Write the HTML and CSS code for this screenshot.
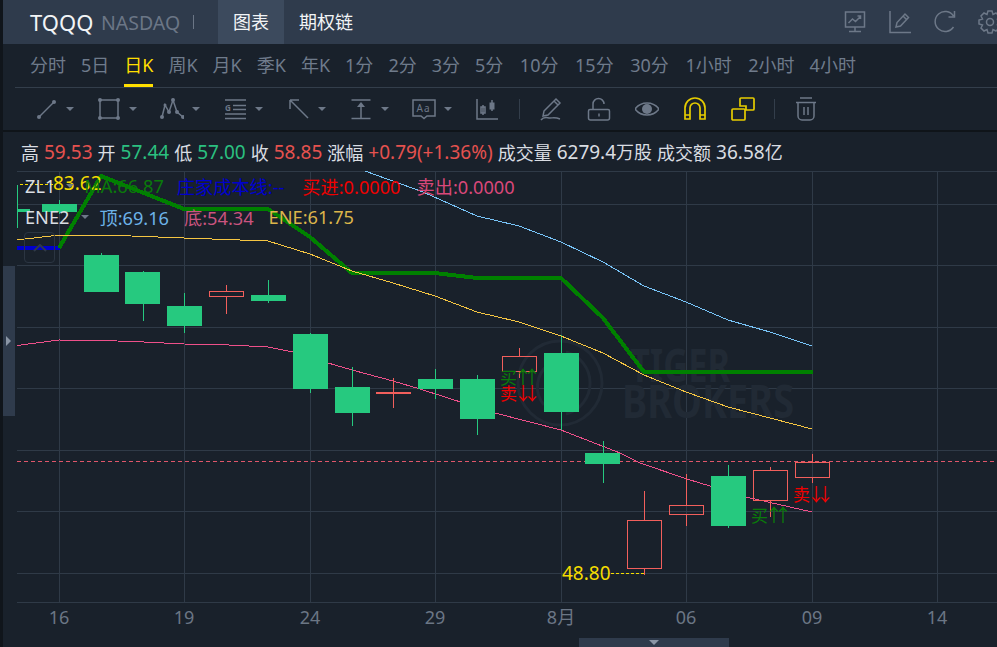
FILE: index.html
```html
<!DOCTYPE html>
<html lang="zh">
<head>
<meta charset="utf-8">
<title>TQQQ</title>
<link rel="stylesheet" href="styles.css">
</head>
<body>
<div class="app">
  <div class="edge"></div>
  <main class="main">
    <header class="header">
      <span class="sym">TQQQ</span>
      <span class="mkt">NASDAQ</span>
      <span class="bar"></span>
      <span class="tab on">图表</span>
      <span class="tab">期权链</span>
      <div class="head-icons">
        <svg class="ico" viewBox="0 0 24 24"><path d="M2.500 2h19v15h-19zM12 17v4M6 21.500h12M5.500 13l4-4 3 2.500 5-5M14.500 6h3v3"/></svg>
        <svg class="ico" viewBox="0 0 24 24"><path d="M2 1v21.500h21M8 17l1-4.500 8-8.500 3.500 3.500-8 8.500zM15 6l3.500 3.500"/></svg>
        <svg class="ico" viewBox="0 0 24 24"><path d="M20.500 17a10 10 0 1 1 0-11M21.500 1v6h-6"/></svg>
        <svg class="ico" viewBox="0 0 24 24"><path d="M10 1h4l1 3.500 3-1.500 3 3-1.500 3 3.500 1v4l-3.500 1 1.500 3-3 3-3-1.500-1 3.500h-4l-1-3.500-3 1.500-3-3 1.500-3-3.500-1v-4l3.500-1-1.500-3 3-3 3 1.500z"/><circle cx="12" cy="12" r="3.500"/></svg>
      </div>
    </header>
    <nav class="periods">
      <span class="per">分时</span><span class="per">5日</span><span class="per on">日K</span><span class="per">周K</span><span class="per">月K</span><span class="per">季K</span><span class="per">年K</span><span class="per">1分</span><span class="per">2分</span><span class="per">3分</span><span class="per">5分</span><span class="per">10分</span><span class="per">15分</span><span class="per">30分</span><span class="per">1小时</span><span class="per">2小时</span><span class="per">4小时</span>
    </nav>
    <div class="tools">
      <div class="tool"><svg class="ico" viewBox="0 0 24 24"><path d="M5 20L20 5"/><circle class="dot" cx="5" cy="20" r="2"/><circle class="dot" cx="20" cy="5" r="2"/></svg><i class="caret"></i></div>
      <div class="tool"><svg class="ico" viewBox="0 0 24 24"><path d="M3 3h18v18H3z"/><circle class="dot" cx="3" cy="3" r="2"/><circle class="dot" cx="21" cy="3" r="2"/><circle class="dot" cx="3" cy="21" r="2"/><circle class="dot" cx="21" cy="21" r="2"/></svg><i class="caret"></i></div>
      <div class="tool"><svg class="ico" viewBox="0 0 24 24"><path d="M2 20L5 8l4 7 4-12 4 12 6 5"/><circle class="dot" cx="2" cy="20" r="2"/><circle class="dot" cx="9" cy="15" r="2"/><circle class="dot" cx="13" cy="3" r="2"/><circle class="dot" cx="17" cy="15" r="2"/><circle class="dot" cx="23" cy="20" r="2"/><circle class="dot" cx="5" cy="8" r="1.500"/></svg><i class="caret"></i></div>
      <div class="tool"><svg class="ico" viewBox="0 0 24 24"><path d="M2 3h21M10 8.500h13M10 12.500h13M2 17h21M2 21.500h21"/><text class="ico-t" x="2" y="14">G</text></svg><i class="caret"></i></div>
      <div class="tool"><svg class="ico" viewBox="0 0 24 24"><path d="M22 21L4 3M4 3h9M4 3v9"/></svg><i class="caret"></i></div>
      <div class="tool"><svg class="ico" viewBox="0 0 24 24"><path d="M2.500 3h19M12 8v13M2.500 21.500h19"/><path class="dot" d="M12 5l4 5H8z"/></svg><i class="caret"></i></div>
      <div class="tool"><svg class="ico" viewBox="0 0 24 24"><path d="M1 3h22v16h-8l-3 2.500-3-2.500H1z"/><text class="ico-a" x="4.500" y="15">Aa</text></svg><i class="caret"></i></div>
      <div class="tool last"><svg class="ico" viewBox="0 0 24 24"><path d="M2 2v20h21M8 8v10M17 3v11"/><path class="dot" d="M14.500 5.500h5v7h-5z"/><path d="M6 10h4v6H6z"/></svg></div>
      <i class="sep"></i>
      <div class="btn"><svg class="ico" viewBox="0 0 24 24"><path d="M5 14L17 2l4 4L9 18l-5 1zM15 4l4 4M2 23c3-4 6-2 9-2s5-1 10 1"/></svg></div>
      <div class="btn"><svg class="ico" viewBox="0 0 24 24"><path d="M3 12.500h18a1.500 1.500 0 0 1 1.500 1.500v7a2 2 0 0 1-2 2h-17a2 2 0 0 1-2-2v-7a1.500 1.500 0 0 1 1.500-1.500zM6 12.500V7a5.500 5.500 0 0 1 11 0M12 16.500v3"/></svg></div>
      <div class="btn"><svg class="ico" viewBox="0 0 24 24"><path d="M0 12c6-8 18-8 24 0-6 8-18 8-24 0z"/><circle class="dot" cx="12" cy="12" r="5"/></svg></div>
      <div class="btn gold"><svg class="ico" viewBox="0 0 24 24"><path d="M2 22V11a10 10 0 0 1 20 0v11h-5V11a5 5 0 0 0-10 0v11zM2 18h5M17 18h5"/></svg></div>
      <div class="btn gold"><svg class="ico" viewBox="0 0 24 24"><path d="M10 1h12a1 1 0 0 1 1 1v10a1 1 0 0 1-1 1h-7V9H9V2a1 1 0 0 1 1-1zM2 12h11a1 1 0 0 1 1 1v9a1 1 0 0 1-1 1H2a1 1 0 0 1-1-1v-9a1 1 0 0 1 1-1z"/></svg></div>
      <i class="sep two"></i>
      <div class="btn"><svg class="ico" viewBox="0 0 24 24"><path d="M6 1h12M2 5.500h20M4 6v13a4 4 0 0 0 4 4h8a4 4 0 0 0 4-4V6M10 10v8M14 10v8"/></svg></div>
    </div>
    <div class="quote">
      <span>高</span><span class="n r">59.53</span><span>开</span><span class="n g">57.44</span><span>低</span><span class="n g">57.00</span><span>收</span><span class="n r">58.85</span><span>涨幅</span><span class="n r">+0.79(+1.36%)</span><span>成交量</span><span><span class="n">6279.4</span>万股</span><span>成交额</span><span><span class="n">36.58</span>亿</span>
    </div>
    <section class="chart">
      <svg class="plot" viewBox="3 171 994 476" width="994" height="476">
        <path class="grid" d="M17 171.500H997M17 204.500H997M17 265.500H997M17 327.500H997M17 388.500H997M17 450.500H997M17 511.500H997M17 573.500H997M17 602.500H997M59.500 171V602M184.500 171V602M310.500 171V602M435.500 171V602M561.500 171V602M686.500 171V602M812.500 171V602M937.500 171V602"/>
        <g class="wm">
          <circle cx="560" cy="383" r="42"/>
          <path d="M566 352a32 32 0 0 1 0 62M544 405a28 28 0 0 1 4-40"/>
          <text class="wm-t" x="630" y="382" textLength="100" lengthAdjust="spacingAndGlyphs">TIGER</text>
          <text class="wm-t" x="622" y="418" textLength="172" lengthAdjust="spacingAndGlyphs">BROKERS</text>
        </g>
        <path class="last-price" d="M17 461.500H997"/>
        <polyline class="l-pink" points="17,345.500 59,340 100,340.500 134,341.500 184,344 229,345 268,347 293,352 328,363 352,370 393,381 420,389 495,413 561,430 620,453 640,463 687,479 746,497 812,512"/>
        <rect class="l-blue-bar" x="17" y="246" width="43" height="4"/>
        <g class="down">
          <rect x="42" y="204" width="35" height="8"/><rect x="17" y="209" width="13" height="3"/>
          <rect x="84" y="255" width="35" height="37"/><rect x="125" y="272" width="35" height="32"/>
          <rect x="167" y="306" width="35" height="20"/><rect x="251" y="295" width="35" height="6"/>
          <rect x="293" y="334" width="35" height="55"/><rect x="335" y="387" width="35" height="26"/>
          <rect x="418" y="379" width="35" height="10"/><rect x="460" y="379" width="35" height="40"/>
          <rect x="544" y="353" width="35" height="59"/><rect x="585" y="453" width="35" height="11"/>
          <rect x="711" y="476" width="35" height="50"/>
          <path class="wick" d="M17.500 185V228M59.500 200V214M101.500 253V255M143.500 271V321M184.500 293V333M268.500 280V303M310.500 333V393M352.500 367V426M435.500 369V399M477.500 375V435M561.500 335V430M603.500 441V483M728.500 465V528"/>
        </g>
        <g class="up">
          <path class="wick" d="M226.500 285V291M226.500 296V314M393.500 378V408M519.500 348V356M519.500 372V378M644.500 491V520M644.500 568V575M686.500 474V505M686.500 514V526M770.500 467V470M770.500 500V517M812.500 454V462M812.500 477V483"/>
          <rect x="209.500" y="291.500" width="34" height="5"/>
          <rect x="502.500" y="356.500" width="34" height="15"/>
          <rect x="627.500" y="520.500" width="34" height="48"/>
          <rect x="669.500" y="505.500" width="34" height="9"/>
          <rect x="753.500" y="470.500" width="34" height="30"/>
          <rect x="795.500" y="462.500" width="34" height="15"/>
          <rect class="flat" x="376" y="392" width="35" height="2"/>
        </g>
        <polyline class="l-green" points="59,248 101,176 184,209 268,209 310,237 352,273 435,273 477,278 561,278 603,318 644,372 813,372"/>
        <polyline class="l-gold" points="17,240 59,235 105,235 184,238 268,241 310,254 352,271 393,283 435,296 477,312 519,322 561,336 603,353 644,375 686,392 728,407 770,418 812,429"/>
        <polyline class="l-sky" points="365,171 423,192 477,216 519,226 561,242 603,262 644,286 686,302 728,320 770,332 812,346"/>
        <text class="sig buy" x="500" y="384">买<tspan class="arw" dx="-3">↑↑</tspan></text>
        <text class="sig sell" x="500" y="400">卖<tspan class="arw" dx="-3">↓↓</tspan></text>
        <text class="sig buy" x="751" y="522">买<tspan class="arw" dx="-3">↑↑</tspan></text>
        <text class="sig sell" x="793" y="501">卖<tspan class="arw" dx="-3">↓↓</tspan></text>
        <path class="hl-dash" d="M20 184.500H53M611 573.500H645"/>
        <text class="hl" x="53" y="190">83.62</text>
        <text class="hl" x="562" y="580">48.80</text>
        <g class="axis">
          <text x="59" y="624">16</text><text x="184" y="624">19</text><text x="310" y="624">24</text><text x="435" y="624">29</text><text x="561" y="624">8月</text><text x="686" y="624">06</text><text x="812" y="624">09</text><text x="937" y="624">14</text>
        </g>
      </svg>
      <div class="legend l1">
        <span class="name">ZL1</span><i class="caret"></i>
        <span class="c-ma">MA:66.87</span><span class="c-blue">庄家成本线:--</span><span class="c-red">买进:0.0000</span><span class="c-pink">卖出:0.0000</span>
      </div>
      <div class="legend l2">
        <span class="name">ENE2</span><i class="caret"></i>
        <span class="c-sky">顶:69.16</span><span class="c-rose">底:54.34</span><span class="c-gold">ENE:61.75</span>
      </div>
      <div class="collapse"><svg viewBox="0 0 14 8" width="14" height="8"><path d="M1 7l6-6 6 6"/></svg></div>
      <div class="side-tab"><i></i></div>
      <div class="bottom-tab"><i></i></div>
    </section>
  </main>
</div>
</body>
</html>
```
FILE: styles.css
```css
* { box-sizing: border-box; }
html, body { margin: 0; padding: 0; background: #19212b; }
body {
  font-family: "Noto Sans", "Noto Sans CJK SC", sans-serif;
  overflow: hidden;
}
.app { display: flex; width: 997px; height: 647px; overflow: hidden; }
.edge { width: 3px; background: #10151b; flex: none; }
.main { width: 994px; display: flex; flex-direction: column; background: #19212b; }

.header { height: 44px; flex: none; display: flex; align-items: center; background: #2f3b4c; padding-left: 27px; }
.sym { color: #f2f4f6; font-size: 22px; width: 71px; }
.mkt { color: #6b7686; font-size: 19.500px; width: 92px; }
.bar { width: 1px; height: 14px; background: #6b7686; margin-right: 24px; }
.tab { height: 44px; line-height: 44px; padding: 0 15px; font-size: 18px; color: #f2f4f6; }
.head-icons { display: flex; gap: 21px; margin-left: auto; margin-right: -5px; }
.tab.on { background: #3c4a5d; }

.ico { width: 24px; height: 24px; flex: none; fill: none; stroke: #6d7888; stroke-width: 1.500; display: block; }
.ico .dot { fill: #6d7888; stroke: none; }
.ico-t { font-size: 8px; font-weight: 700; fill: #6d7888; stroke: none; }
.ico-a { font-size: 10px; fill: #6d7888; stroke: none; letter-spacing: 1px; }

.periods { height: 44px; flex: none; display: flex; gap: 15px; margin-left: 12px; padding-left: 15px; border-bottom: 1px solid #333e4b; }
.per { height: 43px; line-height: 42px; font-size: 18px; color: #6f7b8b; white-space: nowrap; }
.per:nth-child(n+12):nth-child(-n+16) { margin-left: 1.600px; }
.per.on { color: #ffdf00; border-bottom: 3px solid #ffdf00; }

.tools { height: 44px; flex: none; display: flex; align-items: center; padding-left: 31px; border-bottom: 2px solid #0f1419; }
.tool { width: 63px; flex: none; display: flex; align-items: center; gap: 8px; }
.tool.last { width: 31px; }
.caret { display: block; width: 0; height: 0; border-left: 4px solid transparent; border-right: 4px solid transparent; border-top: 4px solid #6d7888; }
.sep { width: 1px; height: 20px; background: #333e4b; flex: none; margin: 0 19px 0 13px; }
.sep.two { margin: 0 19px 0 -5px; }
.btn { width: 24px; flex: none; margin-right: 24px; }
.btn:nth-last-child(1) { margin-right: 0; }
.btn.gold .ico { stroke: #e6cc00; stroke-width: 1.700; }

.quote { height: 39px; flex: none; display: flex; align-items: center; gap: 5px; padding-left: 18px; font-size: 18px; color: #d9dde2; white-space: nowrap; }
.n { font-size: 19px; }
.quote .r { color: #e5524f; }
.quote .g { color: #2bc080; }

.chart { position: relative; flex: 1; overflow: hidden; }
.plot { display: block; }
.plot text { font-family: "Noto Sans", "Noto Sans CJK SC", sans-serif; }
.grid { fill: none; stroke: #2f3a47; stroke-width: 1; shape-rendering: crispEdges; }
.wm { fill: none; stroke: #212a35; stroke-width: 3; }
.plot .wm-t { fill: #212a35; stroke: none; font-size: 46px; font-weight: 700; }
.last-price { stroke: #e0566a; stroke-width: 1; stroke-dasharray: 4 3; shape-rendering: crispEdges; }
.l-pink { fill: none; stroke: #ee508a; stroke-width: 1; shape-rendering: crispEdges; }
.l-gold { fill: none; stroke: #f5c542; stroke-width: 1; shape-rendering: crispEdges; }
.l-sky { fill: none; stroke: #78c4f8; stroke-width: 1; shape-rendering: crispEdges; }
.l-green { fill: none; stroke: #008000; stroke-width: 4; shape-rendering: crispEdges; }
.l-blue-bar { fill: #0000cd; shape-rendering: crispEdges; }
.down rect { fill: #26c97f; shape-rendering: crispEdges; }
.wick { fill: none; stroke-width: 1; shape-rendering: crispEdges; }
.down .wick { stroke: #26c97f; }
.up { fill: none; stroke: #f25f5c; shape-rendering: crispEdges; }
.up .flat { fill: #f25f5c; stroke: none; }
.sig { font-size: 17px; }
.plot .arw { font-size: 18px; letter-spacing: -9px; }
.buy { fill: #0a7a0a; }
.sell { fill: #f00000; }
.hl { fill: #f5dc00; font-size: 19px; }
.hl-dash { stroke: #f5dc00; stroke-width: 1; stroke-dasharray: 3 2; shape-rendering: crispEdges; }
.axis text { fill: #6b7685; font-size: 18px; text-anchor: middle; }

.legend { position: absolute; left: 22px; display: flex; align-items: center; font-size: 18.200px; white-space: nowrap; height: 24px; }
.l1 { top: 3px; }
.l2 { top: 34px; }
.name { color: #d9dde2; }
.legend .caret { flex: none; }
.l1 .caret { margin-left: 11px; margin-right: 10px; }
.l2 .caret { margin-left: 12px; margin-right: 10px; }
.legend span + span { margin-left: 15px; }
.legend .c-blue { margin-left: 13px; }
.legend .c-red { margin-left: 18px; }
.legend .c-pink { margin-left: 16px; }
.c-ma { color: #0a7a0a; }
.c-blue { color: #0000cd; }
.c-red { color: #f00000; }
.c-pink { color: #d9487a; }
.c-sky { color: #6db3e8; }
.c-rose { color: #c9547f; }
.c-gold { color: #dcb54a; }

.collapse { position: absolute; left: 21px; top: 61px; width: 31px; height: 31px; border: 1px solid #2b3542; border-radius: 4px; display: flex; align-items: center; justify-content: center; }
.collapse path { fill: none; stroke: #2f3a47; stroke-width: 2; }
.side-tab { position: absolute; left: 0; top: 95px; width: 12px; height: 150px; background: #2f3b4c; display: flex; align-items: center; padding-left: 3px; }
.side-tab i { width: 0; height: 0; border-left: 5px solid #8a95a5; border-top: 5px solid transparent; border-bottom: 5px solid transparent; }
.bottom-tab { position: absolute; left: 576px; bottom: 0; width: 150px; height: 9px; background: #2f3b4c; display: flex; justify-content: center; align-items: center; }
.bottom-tab i { width: 0; height: 0; border-top: 5px solid #8a95a5; border-left: 5px solid transparent; border-right: 5px solid transparent; }
```
